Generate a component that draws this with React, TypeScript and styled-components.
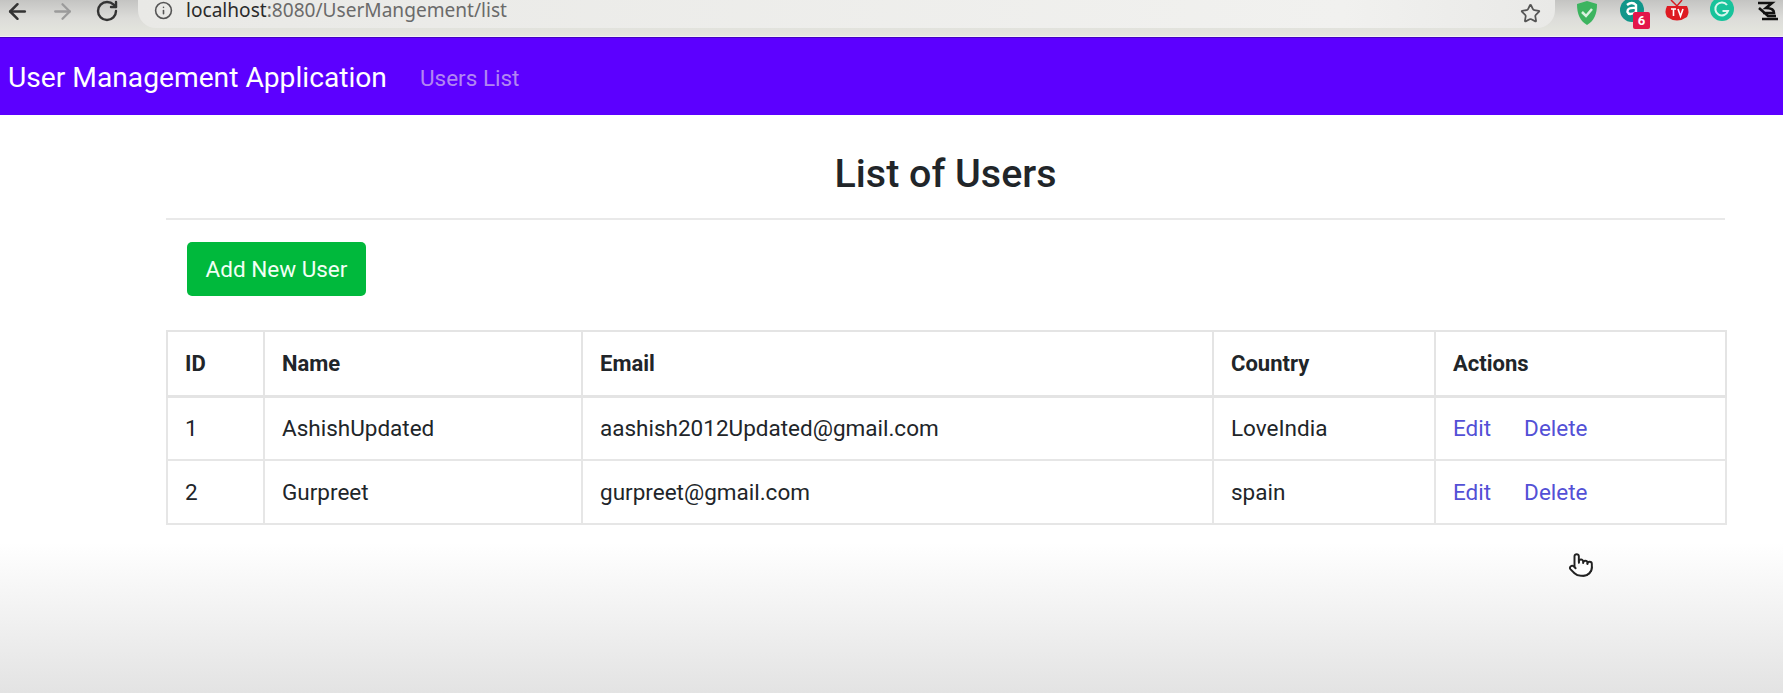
import styled, { createGlobalStyle } from "styled-components";
import { ArrowLeft, ArrowRight, Info, Pointer, RotateCw, Star } from "lucide-react";

const GlobalStyle = createGlobalStyle`
  html, body {
    margin: 0;
    height: 100%;
  }
  body {
    font-family: Roboto, "Liberation Sans", sans-serif;
    background: #fff;
    overflow: hidden;
  }
`;

const Page = styled.div`
  position: relative;
  display: flex;
  flex-direction: column;
  width: 1783px;
  height: 693px;
  overflow: hidden;
`;

const BrowserBar = styled.div`
  display: flex;
  align-items: flex-start;
  height: 36px;
  flex-shrink: 0;
  background: linear-gradient(#c4c4c2, #dcdcd9 50%, #e6e7df);
  border-bottom: 1px solid #f2f0f4;
`;

const NavButtons = styled.div`
  display: flex;
  align-items: center;
  gap: 20px;
  width: 138px;
  height: 22px;
  padding-left: 5px;
  box-sizing: border-box;
`;

const NavButton = styled.span<{ $off?: boolean }>`
  display: flex;
  color: ${(p) => (p.$off ? "#9b9b9b" : "#333")};
`;

const UrlPill = styled.div`
  display: flex;
  align-items: center;
  width: 1417px;
  height: 28px;
  padding: 0 14px 8px 16px;
  box-sizing: border-box;
  background: linear-gradient(90deg, #e9e9e6, #f1f1ef 85%, #e9e9e7);
  border-radius: 0 0 18px 18px;
`;

const UrlText = styled.span`
  margin-left: 13px;
  font-family: "Noto Sans", sans-serif;
  font-size: 19.1px;
  color: #6a6a6a;
  line-height: 20px;
  white-space: nowrap;
  b {
    font-weight: 400;
    color: #2b2b2b;
  }
`;

const StarSlot = styled.span`
  display: flex;
  margin-left: auto;
  margin-top: 6px;
  color: #555;
`;

const Extensions = styled.div`
  display: flex;
  align-items: flex-start;
  gap: 19px;
  padding-left: 19px;
`;

const ExtIcon = styled.svg`
  display: block;
  width: 26px;
  height: 26px;
`;

const AvatarSlot = styled.span`
  position: relative;
  display: block;
  width: 26px;
  height: 26px;
`;

const Badge = styled.span`
  position: absolute;
  left: 14px;
  top: 12px;
  width: 17px;
  height: 17px;
  border-radius: 2px;
  background: #e3164a;
  color: #fff;
  font-size: 13px;
  font-weight: 700;
  line-height: 17px;
  text-align: center;
`;

const NavBar = styled.nav`
  display: flex;
  align-items: center;
  height: 78px;
  flex-shrink: 0;
  padding: 2px 0 0 8px;
  background: #5c00ff;
  border-top: 1px solid #4500c4;
  box-sizing: border-box;
`;

const Brand = styled.span`
  font-size: 28.2px;
  color: #fff;
`;

const NavLink = styled.span`
  margin-left: 33px;
  font-size: 22.5px;
  color: #b286f2;
`;

const Main = styled.main`
  flex: 1;
  padding: 0 58px 0 166px;
  background: linear-gradient(#fff 0, #fff 74%, #e3e3e3 100%);
`;

const Title = styled.h2`
  margin: 0;
  padding: 30px 0 15px;
  font-size: 39.4px;
  line-height: 58px;
  font-weight: 500;
  text-align: center;
  color: #212529;
  border-bottom: 2px solid #e9e9e9;
`;

const AddButton = styled.button`
  display: block;
  width: 179px;
  height: 54px;
  margin: 22px 0 34px 21px;
  border: none;
  border-radius: 5px;
  background: #00b93c;
  color: #f2fff5;
  font-family: inherit;
  font-size: 22.5px;
`;

const UsersTable = styled.table`
  width: 1559px;
  border-collapse: collapse;
  table-layout: fixed;
  font-size: 22.5px;
  color: #212529;
  background: #fff;
`;

const HeadCell = styled.th<{ $w: number }>`
  box-sizing: border-box;
  width: ${(p) => p.$w}px;
  height: 65px;
  padding: 0 17px;
  text-align: left;
  font-weight: 700;
  font-size: 22px;
  border: 2px solid #e4e4e4;
  border-bottom-width: 3px;
`;

const Cell = styled.td`
  box-sizing: border-box;
  height: 64px;
  padding: 0 17px;
  border: 2px solid #e6e6e6;
`;

const ActionLink = styled.a<{ $gap?: boolean }>`
  color: #5350d6;
  margin-left: ${(p) => (p.$gap ? "33px" : "0")};
`;

const Cursor = styled.span`
  position: absolute;
  left: 1568px;
  top: 552px;
  display: flex;
  color: #222;
`;

const users = [
  { id: 1, name: "AshishUpdated", email: "aashish2012Updated@gmail.com", country: "LoveIndia" },
  { id: 2, name: "Gurpreet", email: "gurpreet@gmail.com", country: "spain" },
];

const columns: [string, number][] = [
  ["ID", 97],
  ["Name", 318],
  ["Email", 631],
  ["Country", 222],
  ["Actions", 291],
];

export default function App() {
  return (
    <Page>
      <GlobalStyle />
      <BrowserBar>
        <NavButtons>
          <NavButton><ArrowLeft size={25} strokeWidth={2.4} /></NavButton>
          <NavButton $off><ArrowRight size={25} strokeWidth={2.2} /></NavButton>
          <NavButton><RotateCw size={24} strokeWidth={2.4} /></NavButton>
        </NavButtons>
        <UrlPill>
          <Info size={19} color="#555" />
          <UrlText><b>localhost</b>:8080/UserMangement/list</UrlText>
          <StarSlot><Star size={21} /></StarSlot>
        </UrlPill>
        <Extensions>
          <ExtIcon viewBox="0 0 26 26">
            <path d="M13 1 L23 4 C23 14 20 21 13 25 C6 21 3 14 3 4 Z" fill="#3cb45f" />
            <path d="M8 12 L12 16 L18 9" fill="none" stroke="#d9f2df" strokeWidth="2.5" />
          </ExtIcon>
          <AvatarSlot>
            <ExtIcon viewBox="0 0 26 26">
              <circle cx="13" cy="10" r="12" fill="#10968a" />
              <path d="M8 5 Q13 1 17 5 V15 M17 8 Q8 7 8.5 12 Q10 16 17 12" fill="none" stroke="#fff" strokeWidth="2.4" />
            </ExtIcon>
            <Badge>6</Badge>
          </AvatarSlot>
          <ExtIcon viewBox="0 0 26 26">
            <path d="M7 0 L13 6 L18 0" fill="none" stroke="#d81920" strokeWidth="1.5" />
            <path d="M3 6 H23 Q26 12 23 17 Q13 24 3 17 Q0 12 3 6 Z" fill="#de1a22" />
            <path d="M7 9 H12 M9.5 9 V16 M14 9 L16.5 16 L19 9" fill="none" stroke="#fff" strokeWidth="1.6" />
          </ExtIcon>
          <ExtIcon viewBox="0 0 26 26">
            <circle cx="13" cy="9" r="12" fill="#17c39b" />
            <path d="M18 5 A6.5 6.5 0 1 0 19 11 H13.5" fill="none" stroke="#d7f7ee" strokeWidth="2" />
          </ExtIcon>
          <ExtIcon viewBox="0 0 26 26">
            <path d="M4 3 H18 L12 8 Q20 8 20 13 L9 13 M5 8 L14 16 H22 M8 19 H24" fill="none" stroke="#111" strokeWidth="2.6" />
          </ExtIcon>
        </Extensions>
      </BrowserBar>
      <NavBar>
        <Brand>User Management Application</Brand>
        <NavLink>Users List</NavLink>
      </NavBar>
      <Main>
        <Title>List of Users</Title>
        <AddButton>Add New User</AddButton>
        <UsersTable>
          <thead>
            <tr>
              {columns.map(([label, w]) => (
                <HeadCell key={label} $w={w}>{label}</HeadCell>
              ))}
            </tr>
          </thead>
          <tbody>
            {users.map((u) => (
              <tr key={u.id}>
                <Cell>{u.id}</Cell>
                <Cell>{u.name}</Cell>
                <Cell>{u.email}</Cell>
                <Cell>{u.country}</Cell>
                <Cell>
                  <ActionLink>Edit</ActionLink>
                  <ActionLink $gap>Delete</ActionLink>
                </Cell>
              </tr>
            ))}
          </tbody>
        </UsersTable>
      </Main>
      <Cursor><Pointer size={26} strokeWidth={1.8} fill="#fff" /></Cursor>
    </Page>
  );
}
